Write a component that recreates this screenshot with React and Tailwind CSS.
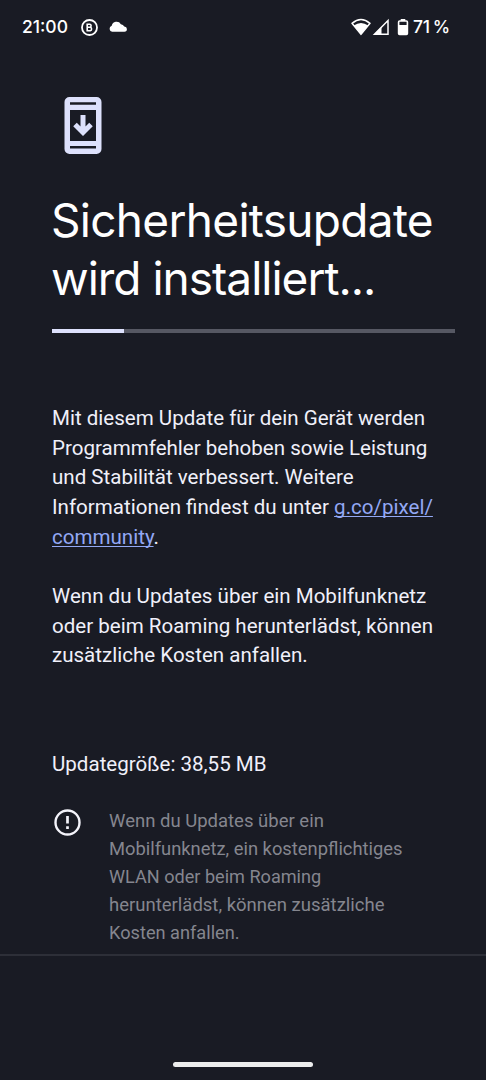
function StatusBar() {
  return (
    <header className="flex h-[54px] items-center pl-[22px] pr-[36px] font-['Inter',sans-serif] text-[17.5px] font-medium text-white">
      <span className="w-[46px] whitespace-nowrap">21:00</span>
      <svg className="ml-[12.5px] h-[17px] w-[17px]" viewBox="0 0 17 17" fill="none" stroke="white">
        <circle cx="8.5" cy="8.5" r="7.5" strokeWidth="1.8" />
        <path d="M6.2 5.2v6.6h3a1.8 1.8 0 0 0 0-3.5h-3h2.7a1.6 1.6 0 0 0 0-3.1z" strokeWidth="1.6" />
      </svg>
      <svg className="mb-[1px] ml-[11px] h-[11px] w-[18px]" viewBox="0 0 18 11" fill="white">
        <path d="M3.2 10.8A3.1 3.1 0 0 1 2.7 4.8A5 5 0 0 1 11.9 3.2A3.8 3.8 0 0 1 15.2 5.6A2.6 2.6 0 0 1 15.4 10.8z" />
      </svg>
      <svg className="ml-auto h-[18px] w-[20px]" viewBox="0 0 20 18" fill="none">
        <path d="M1 5.3Q10-2.2 19 5.3L10 16.4z" stroke="white" strokeWidth="1.5" strokeLinejoin="round" />
        <path d="M2.8 7.4Q10 2.4 17.2 7.4L10 16.2z" fill="white" />
      </svg>
      <svg className="ml-px h-[18px] w-[18px]" viewBox="0 0 18 18" fill="none">
        <path d="M2.5 16.3H16V2.5z" stroke="white" strokeWidth="1.5" />
        <path d="M2 16.6H9.5V8.7z" fill="white" />
      </svg>
      <svg className="ml-[7px] h-[18px] w-[12px]" viewBox="0 0 12 18" fill="none">
        <path d="M3.7 1h4.6v2H3.7z" fill="white" />
        <rect x="1.6" y="3" width="8.8" height="13.4" rx="1" stroke="white" strokeWidth="1.6" />
        <path d="M2 7h8v9H2z" fill="white" />
      </svg>
      <span className="ml-[4px] w-[37px] tracking-[-0.3px] whitespace-nowrap">71<span className="ml-[3px]">%</span></span>
    </header>
  );
}

function Line({ className = "", children }) {
  return <span className={`block whitespace-nowrap ${className}`}>{children}</span>;
}

export default function App() {
  return (
    <div className="flex h-[1080px] w-[486px] flex-col overflow-hidden bg-[#191b24] font-['Roboto',sans-serif] text-[#f0f0fa]">
      <StatusBar />
      <main className="flex h-[900px] shrink-0 flex-col pl-[52px] pr-[31px]">
        <svg className="ml-[12px] mt-[42px] h-[59px] w-[38px] shrink-0" viewBox="0 0 38 59" fill="none">
          <path
            fillRule="evenodd"
            fill="#dde1fc"
            d="M5.5 1h27a5 5 0 0 1 5 5v47a5 5 0 0 1-5 5h-27a5 5 0 0 1-5-5V6a5 5 0 0 1 5-5zM6 6.3v2.5h26V6.3zM6 14v31h26V14zM6 50v2.6h26V50z"
          />
          <path d="M19 19v18M11 28.5l8 8l8-8" stroke="#dde1fc" strokeWidth="5" />
        </svg>

        <h1 className="-ml-px mt-[36px] font-['Inter',sans-serif] text-[46px] font-normal leading-[58px] text-white">
          <Line className="tracking-[-0.7px]">Sicherheitsupdate</Line>
          <Line className="tracking-[-1px]">wird installiert...</Line>
        </h1>

        <div className="mt-[22px] h-[4px] shrink-0 bg-[#565863]">
          <div className="h-full w-[72px] bg-[#dde1fc]" />
        </div>

        <div className="mt-[70.8px] text-[20.56px] leading-[29.7px]">
          <p>
            <Line>Mit diesem Update für dein Gerät werden</Line>
            <Line>Programmfehler behoben sowie Leistung</Line>
            <Line>und Stabilität verbessert. Weitere</Line>
            <Line>Informationen findest du unter <a className="text-[#93a8f4] underline decoration-1 underline-offset-[2px] [text-decoration-skip-ink:none]">g.co/pixel/</a></Line>
            <Line><a className="text-[#93a8f4] underline decoration-1 underline-offset-[2px] [text-decoration-skip-ink:none]">community</a>.</Line>
          </p>
          <p className="mt-[29.7px]">
            <Line>Wenn du Updates über ein Mobilfunknetz</Line>
            <Line>oder beim Roaming herunterlädst, können</Line>
            <Line>zusätzliche Kosten anfallen.</Line>
          </p>
          <p className="mt-[78.4px]">Updategröße: 38,55 MB</p>
        </div>

        <section className="mt-[27px] flex">
          <svg className="ml-[2px] mt-[3px] h-[27px] w-[27px] shrink-0" viewBox="0 0 27 27" fill="none" stroke="#f4f4fb">
            <circle cx="13.5" cy="13.5" r="12" strokeWidth="2.4" />
            <path d="M13.5 7v7.6M13.5 17.2v2.8" strokeWidth="2.7" />
          </svg>
          <p className="ml-[28px] mt-px text-[18.5px] leading-[28px] text-[#85868f]">
            <Line>Wenn du Updates über ein</Line>
            <Line className="text-[18.35px]">Mobilfunknetz, ein kostenpflichtiges</Line>
            <Line className="text-[18.1px]">WLAN oder beim Roaming</Line>
            <Line>herunterlädst, können zusätzliche</Line>
            <Line className="text-[18.2px]">Kosten anfallen.</Line>
          </p>
        </section>
      </main>
      <footer className="flex flex-1 items-end justify-center border-t-2 border-[#2d2f38] pb-[13px]">
        <div className="h-[5px] w-[140px] rounded-full bg-[#eceded]" />
      </footer>
    </div>
  );
}
